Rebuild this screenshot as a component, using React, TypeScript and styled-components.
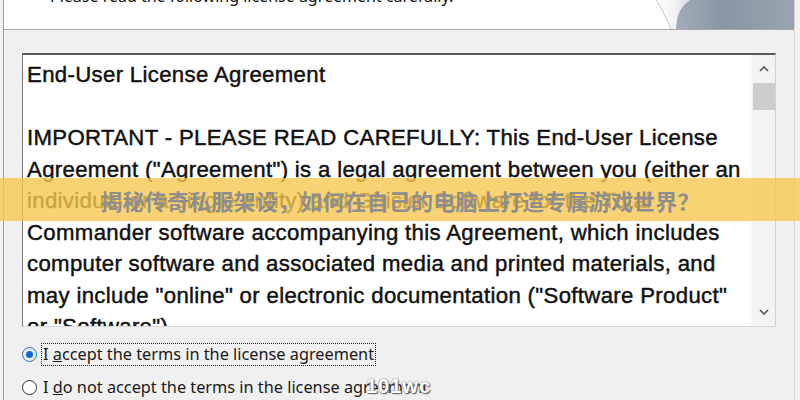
import styled, { createGlobalStyle } from 'styled-components';

const Global = createGlobalStyle`
    html, body {
        margin: 0;
        padding: 0;
        background: #f4f2ee;
    }
    #root {
        width: 800px;
        height: 400px;
        overflow: hidden;
    }
`;

const Page = styled.div`
    position: relative;
    width: 800px;
    height: 400px;
    overflow: hidden;
    padding-left: 3px;
    box-sizing: border-box;
    background: #f4f2ee;
`;

const Window = styled.div`
    width: 792px;
    height: 400px;
    display: flex;
    flex-direction: column;
    background: #f0f0f0;
    border-left: 1px solid #9c9c9c;
    border-right: 1px solid #d6d6d6;
    box-sizing: border-box;
`;

const Header = styled.div`
    height: 29px;
    flex: none;
    display: flex;
    justify-content: space-between;
    background: #ffffff;
    border-bottom: 1px solid #a8a8a8;
    overflow: hidden;
`;

const Prompt = styled.div`
    margin: -14px 0 0 46px;
    font-family: 'Noto Sans', 'Open Sans', sans-serif;
    font-size: 16px;
    line-height: 20px;
    color: #111;
    white-space: nowrap;
`;

const Body = styled.div`
    flex: 1;
    display: flex;
    flex-direction: column;
    padding: 23px 16px 0 18px;
`;

const TextBox = styled.div`
    height: 274px;
    width: 754px;
    display: flex;
    box-sizing: border-box;
    background: #ffffff;
    border-style: solid;
    border-width: 2px 1px 1px 1px;
    border-color: #5a5a5a #d2d2d2 #d8d8d8 #7a7a7a;
`;

const Agreement = styled.div`
    flex: 1;
    overflow: hidden;
    padding: 4px 0 0 4px;
    font-family: 'Liberation Sans', Arial, sans-serif;
    font-size: 22.2px;
    letter-spacing: 0.33px;
    line-height: 31.5px;
    color: #111;
    -webkit-text-stroke: 0.45px #111;
`;

const Line = styled.div`
    white-space: nowrap;
    height: 31.5px;
`;

const ScrollBar = styled.div`
    width: 23px;
    flex: none;
    display: flex;
    flex-direction: column;
    align-items: center;
    background: #f3f3f3;
    border-left: 1px solid #f8f8f8;
`;

const Arrow = styled.div`
    height: 28px;
    width: 100%;
    display: flex;
    align-items: center;
    justify-content: center;
`;

const Thumb = styled.div`
    width: 22px;
    height: 27px;
    background: #cdcdcd;
`;

const Track = styled.div`
    flex: 1;
`;

const Choices = styled.div`
    display: flex;
    flex-direction: column;
    gap: 10px;
    padding: 16px 0 0 0;
`;

const Choice = styled.label`
    height: 23px;
    display: flex;
    align-items: center;
    gap: 4px;
    font-family: 'Noto Sans', 'Open Sans', sans-serif;
    font-size: 16.3px;
    color: #1a1a1a;
    white-space: nowrap;
`;

const Radio = styled.span<{ $checked?: boolean }>`
    width: 15px;
    height: 15px;
    box-sizing: border-box;
    border-radius: 50%;
    border: 1px solid ${(p) => (p.$checked ? '#2f6fc0' : '#333')};
    background: ${(p) => (p.$checked ? '#e6f0fb' : '#fff')};
    display: flex;
    align-items: center;
    justify-content: center;
    flex: none;

    &::after {
        content: '';
        display: ${(p) => (p.$checked ? 'block' : 'none')};
        width: 7px;
        height: 7px;
        border-radius: 50%;
        background: #1466d2;
    }
`;

const Caption = styled.span<{ $focused?: boolean }>`
    padding: 0 1px;
    line-height: 21px;
    border: 1px dotted ${(p) => (p.$focused ? '#222' : 'transparent')};
`;

const Key = styled.span`
    text-decoration: underline;
`;

const Banner = styled.div`
    position: absolute;
    left: 0;
    right: 0;
    top: 178px;
    height: 43px;
    display: flex;
    align-items: center;
    justify-content: center;
    background: rgba(248, 200, 80, 0.8);
    font-family: 'Noto Sans CJK SC', 'Noto Sans', sans-serif;
    font-weight: 700;
    font-size: 22px;
    letter-spacing: 0.2px;
    color: #8e8e8e;
    white-space: nowrap;
`;

const Stamp = styled.div`
    position: absolute;
    left: 366px;
    top: 375px;
    font-family: 'Liberation Sans', sans-serif;
    font-weight: 700;
    font-size: 20px;
    color: #ffffff;
    text-shadow: 0 0 2px #666, 1px 1px 1px #555;
    letter-spacing: 1px;
`;

function CurlArt() {
    return (
        <svg width="140" height="29" viewBox="0 0 140 29">
            <defs>
                <linearGradient id="stone" x1="0" y1="0" x2="1" y2="0">
                    <stop offset="0" stopColor="#a3adb8" />
                    <stop offset="0.4" stopColor="#8995a3" />
                    <stop offset="1" stopColor="#9aa4b0" />
                </linearGradient>
                <linearGradient id="fold" x1="0" y1="0" x2="1" y2="0">
                    <stop offset="0" stopColor="#ffffff" />
                    <stop offset="0.6" stopColor="#eef0f2" />
                    <stop offset="1" stopColor="#d4d8dc" />
                </linearGradient>
            </defs>
            <path d="M36 0 L140 0 L140 29 L22 29 C22 16 26 6 36 0 Z" fill="url(#stone)" />
            <path d="M2 0 L36 0 C26 6 22 16 22 29 L17 29 C12 18 8 9 2 0 Z" fill="url(#fold)" />
            <path d="M2 0 C8 9 12 18 17 29" stroke="#c4c8cc" strokeWidth="1" fill="none" />
        </svg>
    );
}

function Chevron({ up }: { up?: boolean }) {
    return (
        <svg width="10" height="6" viewBox="0 0 10 6">
            <path
                d={up ? 'M1 5 L5 1 L9 5' : 'M1 1 L5 5 L9 1'}
                stroke="#555"
                strokeWidth="1.6"
                fill="none"
            />
        </svg>
    );
}

const lines = [
    'End-User License Agreement',
    '',
    'IMPORTANT - PLEASE READ CAREFULLY: This End-User License',
    'Agreement ("Agreement") is a legal agreement between you (either an',
    'individual or a single entity) and Ghisler Software for the Total',
    'Commander software accompanying this Agreement, which includes',
    'computer software and associated media and printed materials, and',
    'may include "online" or electronic documentation ("Software Product"',
    'or "Software").',
];

function App() {
    return (
        <Page>
            <Global />
            <Window>
                <Header>
                    <Prompt>Please read the following license agreement carefully.</Prompt>
                    <CurlArt />
                </Header>
                <Body>
                    <TextBox>
                        <Agreement>
                            {lines.map((l, i) => (
                                <Line key={i}>{l}</Line>
                            ))}
                        </Agreement>
                        <ScrollBar>
                            <Arrow>
                                <Chevron up />
                            </Arrow>
                            <Thumb />
                            <Track />
                            <Arrow>
                                <Chevron />
                            </Arrow>
                        </ScrollBar>
                    </TextBox>
                    <Choices>
                        <Choice>
                            <Radio $checked />
                            <Caption $focused>
                                I <Key>a</Key>ccept the terms in the license agreement
                            </Caption>
                        </Choice>
                        <Choice>
                            <Radio />
                            <Caption>
                                I <Key>d</Key>o not accept the terms in the license agreement
                            </Caption>
                        </Choice>
                    </Choices>
                </Body>
            </Window>
            <Banner>揭秘传奇私服架设，如何在自己的电脑上打造专属游戏世界？</Banner>
            <Stamp>101wc</Stamp>
        </Page>
    );
}

export default App;
